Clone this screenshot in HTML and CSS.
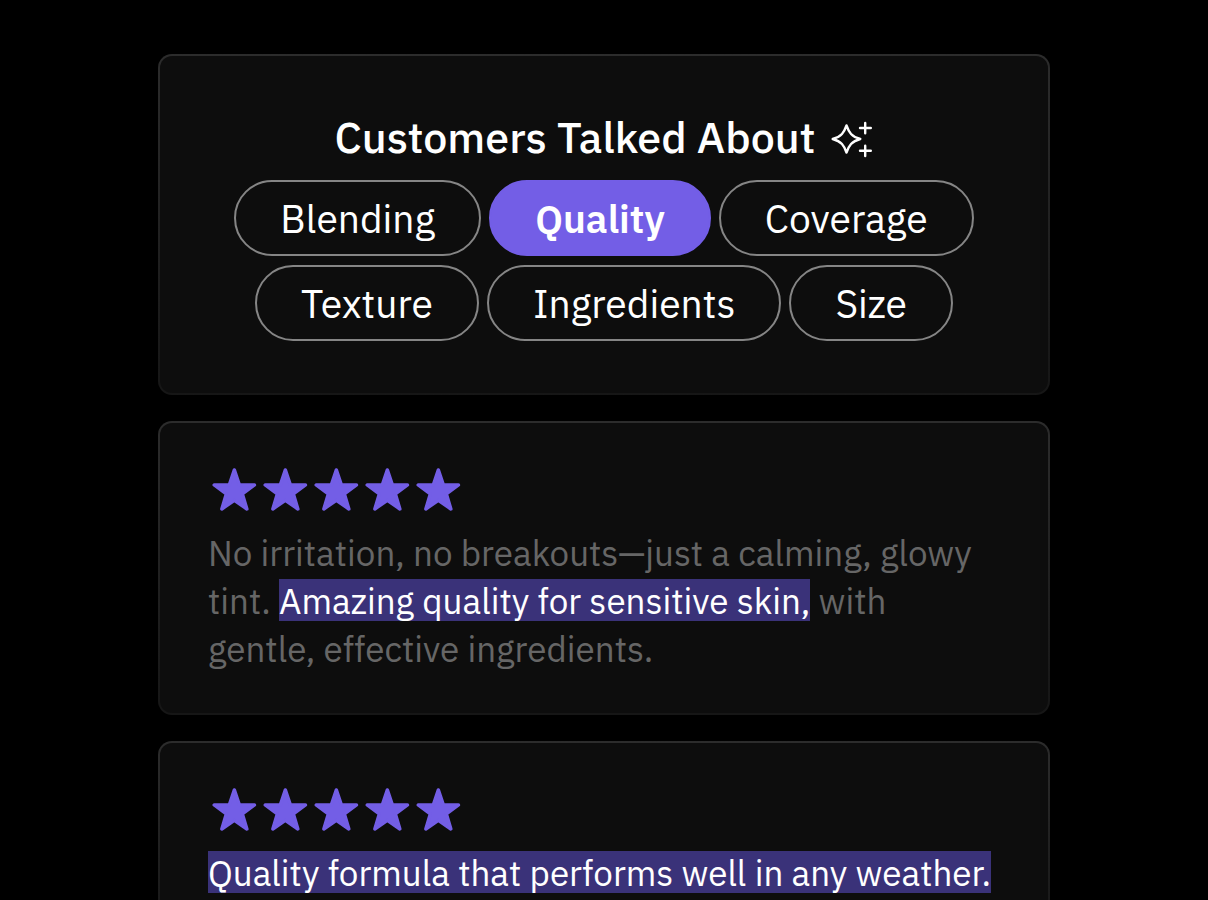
FILE: index.html
```html
<!DOCTYPE html>
<html lang="en">
<head>
  <meta charset="UTF-8" />
  <meta name="viewport" content="width=device-width, initial-scale=1" />
  <title>Customer Reviews</title>
  <link rel="stylesheet" href="styles.css">
</head>
<body>
  <svg class="sprite" aria-hidden="true">
    <symbol id="star" viewBox="0 0 24 24">
      <path d="M12.400 2.300 14.800 9.400H21.900L16.200 13.600 18.300 20.700 12.400 16.600 6.500 20.700 8.600 13.600 2.900 9.400H10Z" fill="currentColor" stroke="currentColor" stroke-width="1.600" stroke-linejoin="round" />
    </symbol>
  </svg>

  <main class="reviews">
    <section class="card topics">
      <h1 class="topics-title">
        Customers Talked About
        <svg class="sparkle" viewBox="0 0 42 42" fill="none" stroke="currentColor" stroke-width="2.400" stroke-linejoin="round" stroke-linecap="round" aria-hidden="true">
          <path d="M15.500 9.500C18 16.500 20.500 20.700 29.300 23C20.500 25.300 18 29.500 15.500 36.500C13 29.500 10.500 25.300 1.700 23C10.500 20.700 13 16.500 15.500 9.500Z" />
          <path d="M34.200 7V17.200M29 12H39.800M34.200 29.700V40M29 34.700H39.800" />
        </svg>
      </h1>
      <div class="topics-list">
        <button type="button" class="pill">Blending</button>
        <button type="button" class="pill active" aria-pressed="true">Quality</button>
        <button type="button" class="pill">Coverage</button>
        <button type="button" class="pill">Texture</button>
        <button type="button" class="pill">Ingredients</button>
        <button type="button" class="pill">Size</button>
      </div>
    </section>

    <article class="card review">
      <div class="stars" role="img" aria-label="5 out of 5 stars">
        <svg><use href="#star" /></svg>
        <svg><use href="#star" /></svg>
        <svg><use href="#star" /></svg>
        <svg><use href="#star" /></svg>
        <svg><use href="#star" /></svg>
      </div>
      <p>No irritation, no breakouts—just a calming, glowy tint. <mark>Amazing quality for sensitive skin,</mark> with gentle, effective ingredients.</p>
    </article>

    <article class="card review">
      <div class="stars" role="img" aria-label="5 out of 5 stars">
        <svg><use href="#star" /></svg>
        <svg><use href="#star" /></svg>
        <svg><use href="#star" /></svg>
        <svg><use href="#star" /></svg>
        <svg><use href="#star" /></svg>
      </div>
      <p><mark>Quality formula that performs well in any weather.</mark></p>
    </article>
  </main>
</body>
</html>
```

FILE: styles.css
```css
* {
  margin: 0;
  padding: 0;
  box-sizing: border-box;
}
body {
  background: #000;
  color: #fff;
  font-family: "IBM Plex Sans", Roboto, sans-serif;
  padding: 54px 24px 0;
}
.sprite {
  display: none;
}
.reviews {
  max-width: 892px;
  margin: 0 auto;
  display: flex;
  flex-direction: column;
  gap: 26px;
}
.card {
  border: 2px solid transparent;
  border-radius: 14px;
  background:
    linear-gradient(#0d0d0d, #0d0d0d) padding-box,
    linear-gradient(#2c2c2c, #161616) border-box;
}
.topics {
  padding: 55px 48px 52px;
  text-align: center;
}
.topics-title {
  display: flex;
  justify-content: center;
  align-items: center;
  gap: 16px;
  margin-bottom: 17px;
  font-size: 43px;
  font-weight: 500;
  line-height: 52px;
}
.sparkle {
  width: 42px;
  height: 42px;
}
.topics-list {
  display: flex;
  flex-wrap: wrap;
  justify-content: center;
  gap: 9px 8px;
}
.pill {
  padding: 13px 44px 11px;
  border: 2px solid #858585;
  border-radius: 38px;
  background: none;
  color: #fff;
  font-family: inherit;
  font-size: 39px;
  line-height: 48px;
  cursor: pointer;
}
.pill.active {
  background: #735ee6;
  border-color: #735ee6;
  font-weight: 600;
}
.review {
  padding: 42px 48px 40px;
}
.stars {
  display: flex;
  height: 51px;
  margin-bottom: 13px;
  color: #735ee6;
}
.stars svg {
  width: 51px;
  height: 51px;
}
.review p {
  color: #666;
  font-size: 35px;
  line-height: 48px;
}
.review mark {
  background: linear-gradient(#3a3279, #3a3279) 0 1px / 100% 42px no-repeat;
  color: #fff;
}
```
